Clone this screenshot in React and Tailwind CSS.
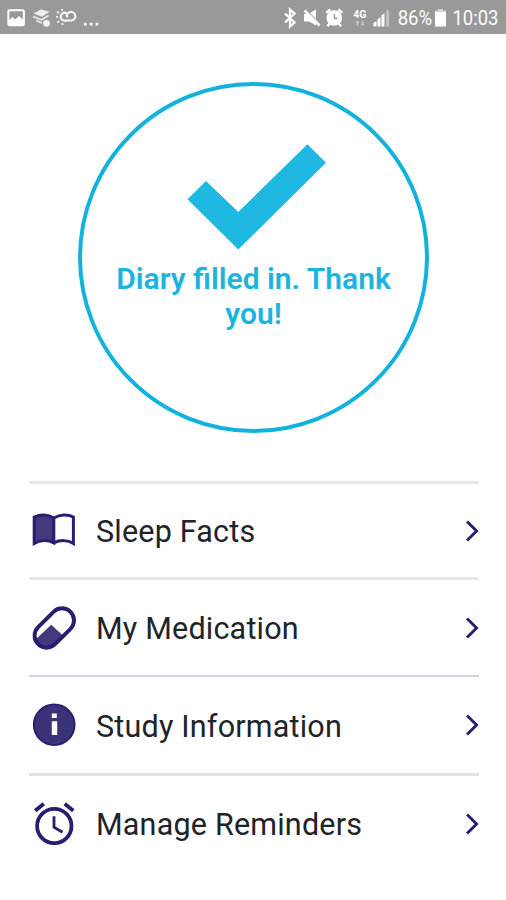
import React from "react";

const BookIcon = () => (
  <svg className="h-11 w-11" viewBox="0 0 44 44">
    <path d="M2.2 8 C8 5.4 16 5.6 21.8 9.2 V34 C16 31.2 8 31 2.2 34.6 Z" fill="#413a7c" />
    <path
      d="M2.2 8 C8 5.2 16 5.2 21.8 9 V33.8 C16 30.8 8 30.8 2.2 34.4 Z M21.8 9 C28 5.2 36 5.2 41.4 8 V34.4 C36 30.8 28 30.8 21.8 33.8"
      fill="none"
      stroke="#281d70"
      strokeWidth="3"
    />
  </svg>
);

const PillIcon = () => (
  <svg className="h-11 w-11" viewBox="0 0 44 44">
    <clipPath id="pill">
      <rect x="-0.6" y="10" width="45.8" height="24" rx="12" transform="rotate(-45 22.3 22)" />
    </clipPath>
    <path d="M19.3 18.7 L31.5 30 L20 46 H-2 V36 L4 33 Z" fill="#413a7c" clipPath="url(#pill)" />
    <rect
      x="-0.6"
      y="10"
      width="45.8"
      height="24"
      rx="12"
      transform="rotate(-45 22.3 22)"
      fill="none"
      stroke="#281d70"
      strokeWidth="3.9"
    />
  </svg>
);

const InfoIcon = () => (
  <svg className="h-11 w-11" viewBox="0 0 44 44">
    <circle cx="22.2" cy="21.8" r="20.4" fill="#3b3378" stroke="#281d70" strokeWidth="1.8" />
    <path d="M19.8 10.6h5v4.4h-5z M19.8 18.2h5.4v13.8h-5.4z" fill="#fff" />
  </svg>
);

const AlarmIcon = () => (
  <svg className="h-11 w-11" viewBox="0 0 44 44" fill="none" stroke="#281d70">
    <circle cx="22.3" cy="24" r="17.2" strokeWidth="3.8" />
    <path d="M3.2 8.7 L11.8 1.8 M41.3 8.7 L32.7 1.8" strokeWidth="3.9" />
    <path d="M22 14.3 V25.3 L30.5 30.3" strokeWidth="2.8" />
  </svg>
);

const menuItems = [
  { label: "Sleep Facts", Icon: BookIcon, row: "h-24 border-t-3 border-[#e6e6eb]" },
  { label: "My Medication", Icon: PillIcon, row: "h-[98px] border-t-3 border-[#e6e6ea]" },
  { label: "Study Information", Icon: InfoIcon, row: "h-[98px] border-t-2 border-[#d2d1e2]" },
  { label: "Manage Reminders", Icon: AlarmIcon, row: "h-[98px] border-t-3 border-[#e2e1e8]" },
];

const StatusBar = () => (
  <div className="flex h-[34px] items-center bg-[#999999] pt-[2px] pr-1 text-white">
    <svg className="h-8 w-[105px] shrink-0" viewBox="0 0 105 32">
      {/* picture */}
      <rect x="8.3" y="8.3" width="15.6" height="15" rx="1.5" fill="none" stroke="#fff" strokeWidth="2" />
      <path d="M8.5 18.5 L12.5 15 L15 17.5 L19 14 L23.5 18 V23 H8.5 Z" fill="#fff" />
      {/* layers */}
      <path d="M33.5 11.5 L41 7.5 L49.5 9.8 L42 14.8 Z" fill="#eee" />
      <path d="M33 14.5 L41.5 18 L48.5 13.5 M36 18.5 L42 21" fill="none" stroke="#eee" strokeWidth="1.5" />
      <circle cx="46.5" cy="21.3" r="3.4" fill="#f2f2f2" />
      {/* weather */}
      <g fill="none" stroke="#f4f4f4" strokeWidth="2.2">
        <path d="M66.5 18.3 A4 4 0 1 1 66.5 11.2" />
        <path d="M65 18.5 H71.5 A4.3 4.3 0 1 0 68 11.2 C66.3 12.4 66.3 14 68 15" />
        <path d="M62 7V9 M57.2 9.5L58.8 11 M56 14.8H58 M57.5 20.7L59.2 19.2 M62.5 21V23" strokeWidth="1.8" />
      </g>
      <path d="M84 20.8h2.6v2.6H84z M89.8 20.8h2.6v2.6h-2.6z M95.6 20.8h2.6v2.6h-2.6z" fill="#fff" />
    </svg>
    <svg className="ml-auto h-8 w-[114px] shrink-0" viewBox="280 0 114 32">
      {/* bluetooth */}
      <path d="M285 11.5 L294.5 20.5 L290 24.5 V7.5 L294.5 11.5 L285 20.5" fill="none" stroke="#fff" strokeWidth="2.3" />
      {/* muted speaker */}
      <path d="M304 12 H309 L316 7 V23.5 L309 19.5 H304 Z" fill="#fff" />
      <path d="M305.5 7.5 L320 22" stroke="#999999" strokeWidth="1.4" />
      <path d="M304.5 8.5 L319.5 23.5" stroke="#fff" strokeWidth="2.6" />
      {/* alarm */}
      <circle cx="334.3" cy="16" r="7.8" fill="#fff" />
      <path d="M326.3 10.8 L330.3 7.5 M342.3 10.8 L338.3 7.5 M329.5 21.5 L327.5 24.3 M339 21.5 L341 24.3" stroke="#fff" strokeWidth="2.4" />
      <path d="M334.5 12 V16.5 H337.5" fill="none" stroke="#999999" strokeWidth="1.4" />
      {/* network */}
      <text x="353.3" y="15.5" fontSize="10.5" fontWeight="700" fill="#fff" fontFamily="Roboto, sans-serif">4G</text>
      <path d="M357.5 24 V19 M356 20.3 H359 M362.5 18.5 V23.5 M361 22.3 H364" stroke="#c9c9c9" strokeWidth="1.4" />
      {/* signal */}
      <path d="M373.5 21v3.5h3V19z M377.5 17.5v7h3v-9.5z M381.5 13.5v11h3V11z" fill="#fff" />
      <path d="M386.3 8.5h2.8v16h-2.8z" fill="#c4c4c4" />
    </svg>
    <span className="w-[37px] origin-left scale-x-[0.91] whitespace-nowrap pl-[4px] text-[20.5px] leading-8">86%</span>
    <svg className="h-8 w-[17px] shrink-0" viewBox="431 0 17 32">
      <path d="M435 10 V8.5 H438 V7 H443 V8.5 H446 V10 Z" fill="#d4d4d4" />
      <path d="M435 10h11v14.5h-11z" fill="#fff" />
    </svg>
    <span className="w-[54px] origin-left scale-x-[0.9] whitespace-nowrap pl-[5px] text-[20.5px] leading-8">10:03</span>
  </div>
);

const App = () => {
  return (
    <div className="h-[900px] w-[506px] overflow-hidden bg-white font-['Roboto',sans-serif]">
      <StatusBar />
      <div className="mt-12 ml-[78px] flex h-[351px] w-[351px] flex-col items-center rounded-full border-4 border-[#12b2dc] pt-[58px]">
        <svg className="ml-[6px] h-[106px] w-[140px]" viewBox="0 0 140 106">
          <path d="M0.5 55.3 L19 37 L51.3 68 L120.4 0.3 L139 18.8 L51.3 105.5 Z" fill="#1eb8e2" />
        </svg>
        <p className="mt-[11px] w-[300px] text-center text-[30px] leading-[35px] font-semibold text-[#1cb4df]">
          Diary filled in. Thank you!
        </p>
      </div>

      <div className="mt-12 mr-[27px] ml-[29px]">
        {menuItems.map(({ label, Icon, row }) => (
          <div key={label} className={`flex items-center pl-[3px] ${row}`}>
            <Icon />
            <span className="ml-5 pt-[3px] text-[30.5px] leading-9 tracking-[0.2px] whitespace-nowrap text-[#202328]">
              {label}
            </span>
            <svg className="ml-auto h-6 w-[14px]" viewBox="0 0 14 24">
              <path d="M2 2.5 L11.6 12 L2 21.5" fill="none" stroke="#281d70" strokeWidth="2.9" />
            </svg>
          </div>
        ))}
      </div>
    </div>
  );
};

export default App;
